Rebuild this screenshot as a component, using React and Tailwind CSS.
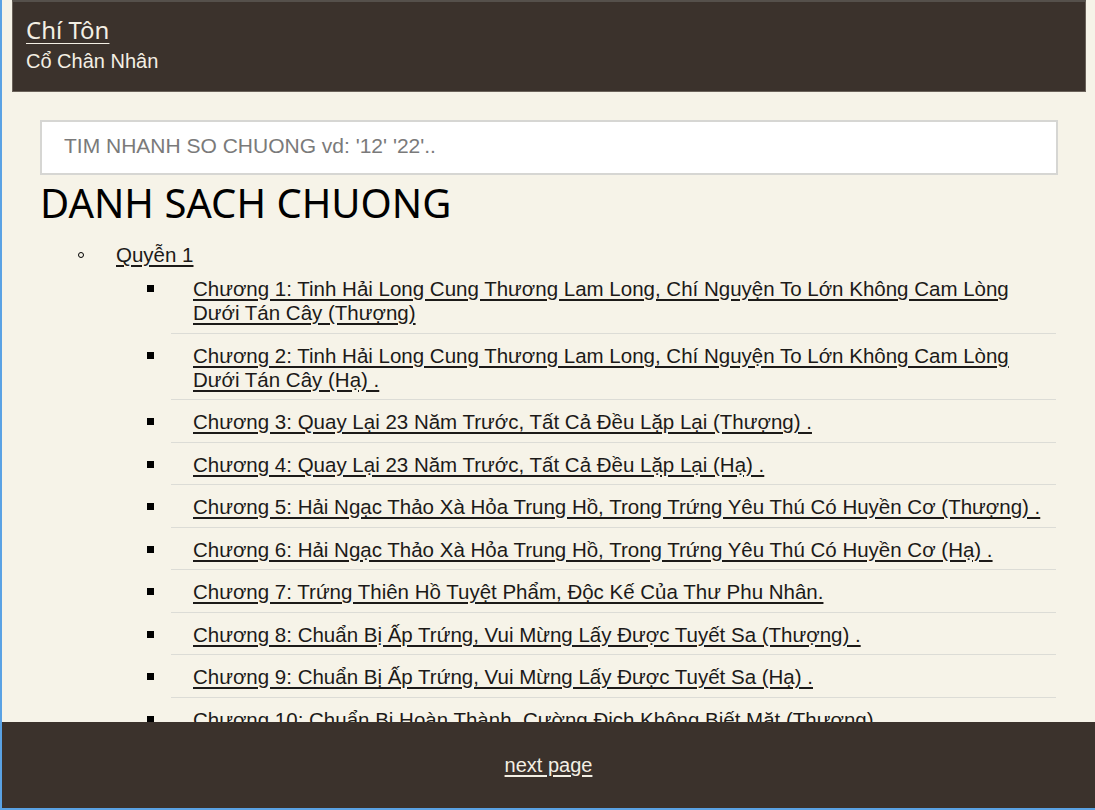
const chapters = [
  "Chương 1: Tinh Hải Long Cung Thương Lam Long, Chí Nguyện To Lớn Không Cam Lòng Dưới Tán Cây (Thượng)",
  "Chương 2: Tinh Hải Long Cung Thương Lam Long, Chí Nguyện To Lớn Không Cam Lòng Dưới Tán Cây (Hạ) .",
  "Chương 3: Quay Lại 23 Năm Trước, Tất Cả Đều Lặp Lại (Thượng) .",
  "Chương 4: Quay Lại 23 Năm Trước, Tất Cả Đều Lặp Lại (Hạ) .",
  "Chương 5: Hải Ngạc Thảo Xà Hỏa Trung Hồ, Trong Trứng Yêu Thú Có Huyền Cơ (Thượng) .",
  "Chương 6: Hải Ngạc Thảo Xà Hỏa Trung Hồ, Trong Trứng Yêu Thú Có Huyền Cơ (Hạ) .",
  "Chương 7: Trứng Thiên Hồ Tuyệt Phẩm, Độc Kế Của Thư Phu Nhân.",
  "Chương 8: Chuẩn Bị Ấp Trứng, Vui Mừng Lấy Được Tuyết Sa (Thượng) .",
  "Chương 9: Chuẩn Bị Ấp Trứng, Vui Mừng Lấy Được Tuyết Sa (Hạ) .",
  "Chương 10: Chuẩn Bị Hoàn Thành, Cường Địch Không Biết Mặt (Thượng)",
  "Chương 11: Chuẩn Bị Hoàn Thành, Cường Địch Không Biết Mặt (Hạ) .",
  "Chương 12: Thiên Hồ Xuất Thế, Vạn Thú Triều Bái (Thượng) .",
];

export default function App() {
  return (
    <div className="min-h-screen bg-[#f6f3e8] border-l-2 border-[#5aa2e4] pb-[120px] font-['Liberation_Sans',Arial,sans-serif]">
      {/* top bar */}
      <header className="ml-[10px] mr-[9px] h-[92px] bg-[#3b322c] border border-t-2 border-[#6a625a] border-t-[#55504b] pl-[13px] pt-[13px]">
        <a
          href="#"
          className="block w-fit text-[24px] leading-[30px] text-[#f3efe4] underline decoration-1 underline-offset-[4px] font-['Noto_Sans',sans-serif]"
        >
          Chí Tôn
        </a>
        <div className="mt-[4px] text-[20px] leading-[24px] text-[#f3efe4]">
          Cổ Chân Nhân
        </div>
      </header>

      <main className="pl-[38px] pr-[37px] pt-[28px]">
        <input
          type="text"
          placeholder="TIM NHANH SO CHUONG vd: '12' '22'.."
          className="block w-full h-[55px] bg-white border-2 border-[#d6d6d3] px-[22px] pb-[3px] text-[21px] text-[#333] placeholder:text-[#7a7a7a] outline-none"
        />

        <h1 className="mt-[4px] text-[40px] leading-[48px] text-black font-['Noto_Sans',sans-serif]">
          DANH SACH CHUONG
        </h1>

        <ul className="mt-[16px] text-[20.5px] leading-[24px]">
          <li>
            <div className="flex items-center h-[24px]">
              <span className="w-[76px] flex justify-end pr-[32px]">
                <span className="block w-[6px] h-[6px] rounded-full border border-black" />
              </span>
              <a href="#" className="text-[#1c1a18] underline underline-offset-[3px]">
                Quyễn 1
              </a>
            </div>

            <ul className="ml-[92px] mr-[2px]">
              {chapters.map((c) => (
                <li key={c} className="flex">
                  <span className="w-[39px] shrink-0 pl-[15px] pt-[18px]">
                    <span className="block w-[7px] h-[7px] bg-black" />
                  </span>
                  <div className="flex-1 border-b border-[#dcdcd6] pl-[22px] pt-[10px] pb-[7.5px]">
                    <a href="#" className="text-[#1c1a18] underline underline-offset-[3px]">
                      {c}
                    </a>
                  </div>
                </li>
              ))}
            </ul>
          </li>
        </ul>
      </main>

      {/* bottom pager */}
      <footer className="fixed bottom-0 left-0 right-0 h-[88px] bg-[#3b322c] border-l-2 border-b-2 border-[#5aa2e4] flex items-center justify-center">
        <a href="#" className="text-[20px] text-[#f3efe4] underline underline-offset-[3px]">
          next page
        </a>
      </footer>
    </div>
  );
}
